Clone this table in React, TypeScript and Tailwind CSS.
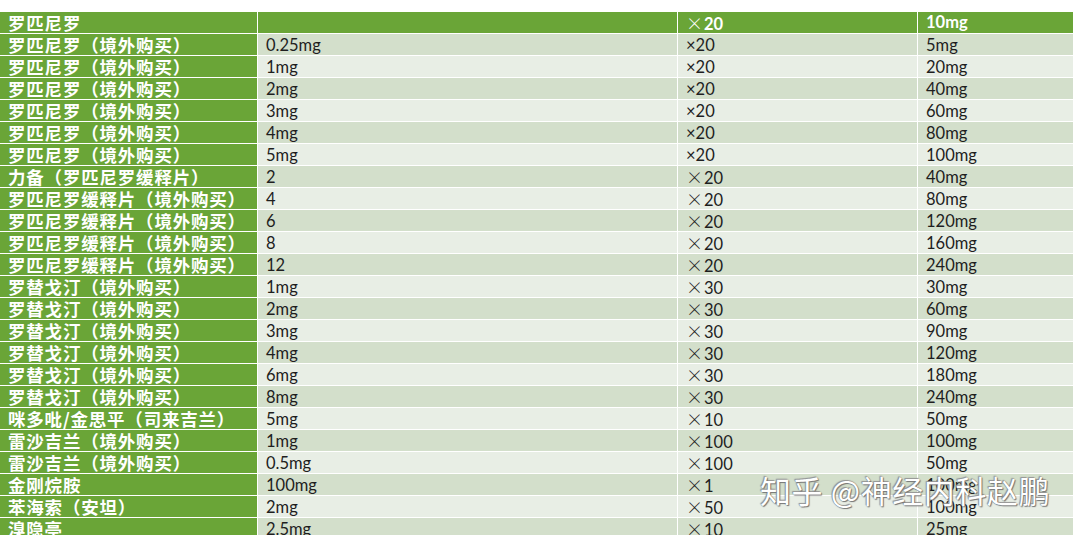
import React from 'react';

type Row = { name: string; dose: string; qty: string; total: string; wideX?: boolean };

const rows: Row[] = [
  { name: '罗匹尼罗（境外购买）', dose: '0.25mg', qty: '20', total: '5mg' },
  { name: '罗匹尼罗（境外购买）', dose: '1mg', qty: '20', total: '20mg' },
  { name: '罗匹尼罗（境外购买）', dose: '2mg', qty: '20', total: '40mg' },
  { name: '罗匹尼罗（境外购买）', dose: '3mg', qty: '20', total: '60mg' },
  { name: '罗匹尼罗（境外购买）', dose: '4mg', qty: '20', total: '80mg' },
  { name: '罗匹尼罗（境外购买）', dose: '5mg', qty: '20', total: '100mg' },
  { name: '力备（罗匹尼罗缓释片）', dose: '2', qty: '20', total: '40mg', wideX: true },
  { name: '罗匹尼罗缓释片（境外购买）', dose: '4', qty: '20', total: '80mg', wideX: true },
  { name: '罗匹尼罗缓释片（境外购买）', dose: '6', qty: '20', total: '120mg', wideX: true },
  { name: '罗匹尼罗缓释片（境外购买）', dose: '8', qty: '20', total: '160mg', wideX: true },
  { name: '罗匹尼罗缓释片（境外购买）', dose: '12', qty: '20', total: '240mg', wideX: true },
  { name: '罗替戈汀（境外购买）', dose: '1mg', qty: '30', total: '30mg', wideX: true },
  { name: '罗替戈汀（境外购买）', dose: '2mg', qty: '30', total: '60mg', wideX: true },
  { name: '罗替戈汀（境外购买）', dose: '3mg', qty: '30', total: '90mg', wideX: true },
  { name: '罗替戈汀（境外购买）', dose: '4mg', qty: '30', total: '120mg', wideX: true },
  { name: '罗替戈汀（境外购买）', dose: '6mg', qty: '30', total: '180mg', wideX: true },
  { name: '罗替戈汀（境外购买）', dose: '8mg', qty: '30', total: '240mg', wideX: true },
  { name: '咪多吡/金思平（司来吉兰）', dose: '5mg', qty: '10', total: '50mg', wideX: true },
  { name: '雷沙吉兰（境外购买）', dose: '1mg', qty: '100', total: '100mg', wideX: true },
  { name: '雷沙吉兰（境外购买）', dose: '0.5mg', qty: '100', total: '50mg', wideX: true },
  { name: '金刚烷胺', dose: '100mg', qty: '1', total: '100mg', wideX: true },
  { name: '苯海索（安坦）', dose: '2mg', qty: '50', total: '100mg', wideX: true },
  { name: '溴隐亭', dose: '2.5mg', qty: '10', total: '25mg', wideX: true },
];

const cjk = "font-['Noto_Sans_CJK_SC',sans-serif]";
const latin = "font-['Lato','Noto_Sans_CJK_SC',sans-serif]";

function WideX() {
  return <span className={`${cjk} font-light text-[17px] mr-[1px]`}>×</span>;
}

export default function App() {
  return (
    <div className="relative w-[1080px] h-[535px] overflow-hidden bg-white pt-[12px]">
      <div className="grid grid-cols-[257px_419px_239px_155px] gap-px w-[1073px] bg-white">
        {/* header */}
        <div className={`h-[21px] bg-[#6aa537] text-white pl-[8px] text-[17.5px] tracking-[0.8px] leading-[21px] font-bold ${cjk}`}>罗匹尼罗</div>
        <div className="h-[21px] bg-[#6aa537]" />
        <div className={`h-[21px] bg-[#6aa537] text-white pl-[8px] text-[16.5px] leading-[21px] font-bold ${latin}`}>
          <WideX />20
        </div>
        <div className={`h-[21px] bg-[#6aa537] text-white pl-[8px] text-[16.5px] leading-[21px] font-bold ${latin}`}>10mg</div>

        {rows.map((r, i) => {
          const band = i % 2 === 0 ? 'bg-[#d3dfcb]' : 'bg-[#e8eee5]';
          return (
            <React.Fragment key={i}>
              <div className={`h-[21px] bg-[#6aa537] text-white pl-[8px] text-[17.5px] tracking-[0.8px] leading-[21px] font-bold whitespace-nowrap ${cjk}`}>
                {r.name}
              </div>
              <div className={`h-[21px] ${band} pl-[8px] text-[16.5px] leading-[22px] text-[#1e1e1e] ${latin}`}>{r.dose}</div>
              <div className={`h-[21px] ${band} pl-[8px] text-[16.5px] leading-[22px] text-[#1e1e1e] ${latin}`}>
                {r.wideX ? <WideX /> : <span>×</span>}
                {r.qty}
              </div>
              <div className={`h-[21px] ${band} pl-[8px] text-[16.5px] leading-[22px] text-[#1e1e1e] ${latin}`}>{r.total}</div>
            </React.Fragment>
          );
        })}
      </div>

      {/* watermark */}
      <div
        className={`absolute left-[760px] top-[471px] text-[31px] tracking-[0.6px] leading-[38px] text-white whitespace-nowrap ${cjk}`}
        style={{ textShadow: '0 0 1px #666, 1px 1px 1px #777, -1px -1px 1px #999' }}
      >
        知乎 @神经内科赵鹏
      </div>
    </div>
  );
}
